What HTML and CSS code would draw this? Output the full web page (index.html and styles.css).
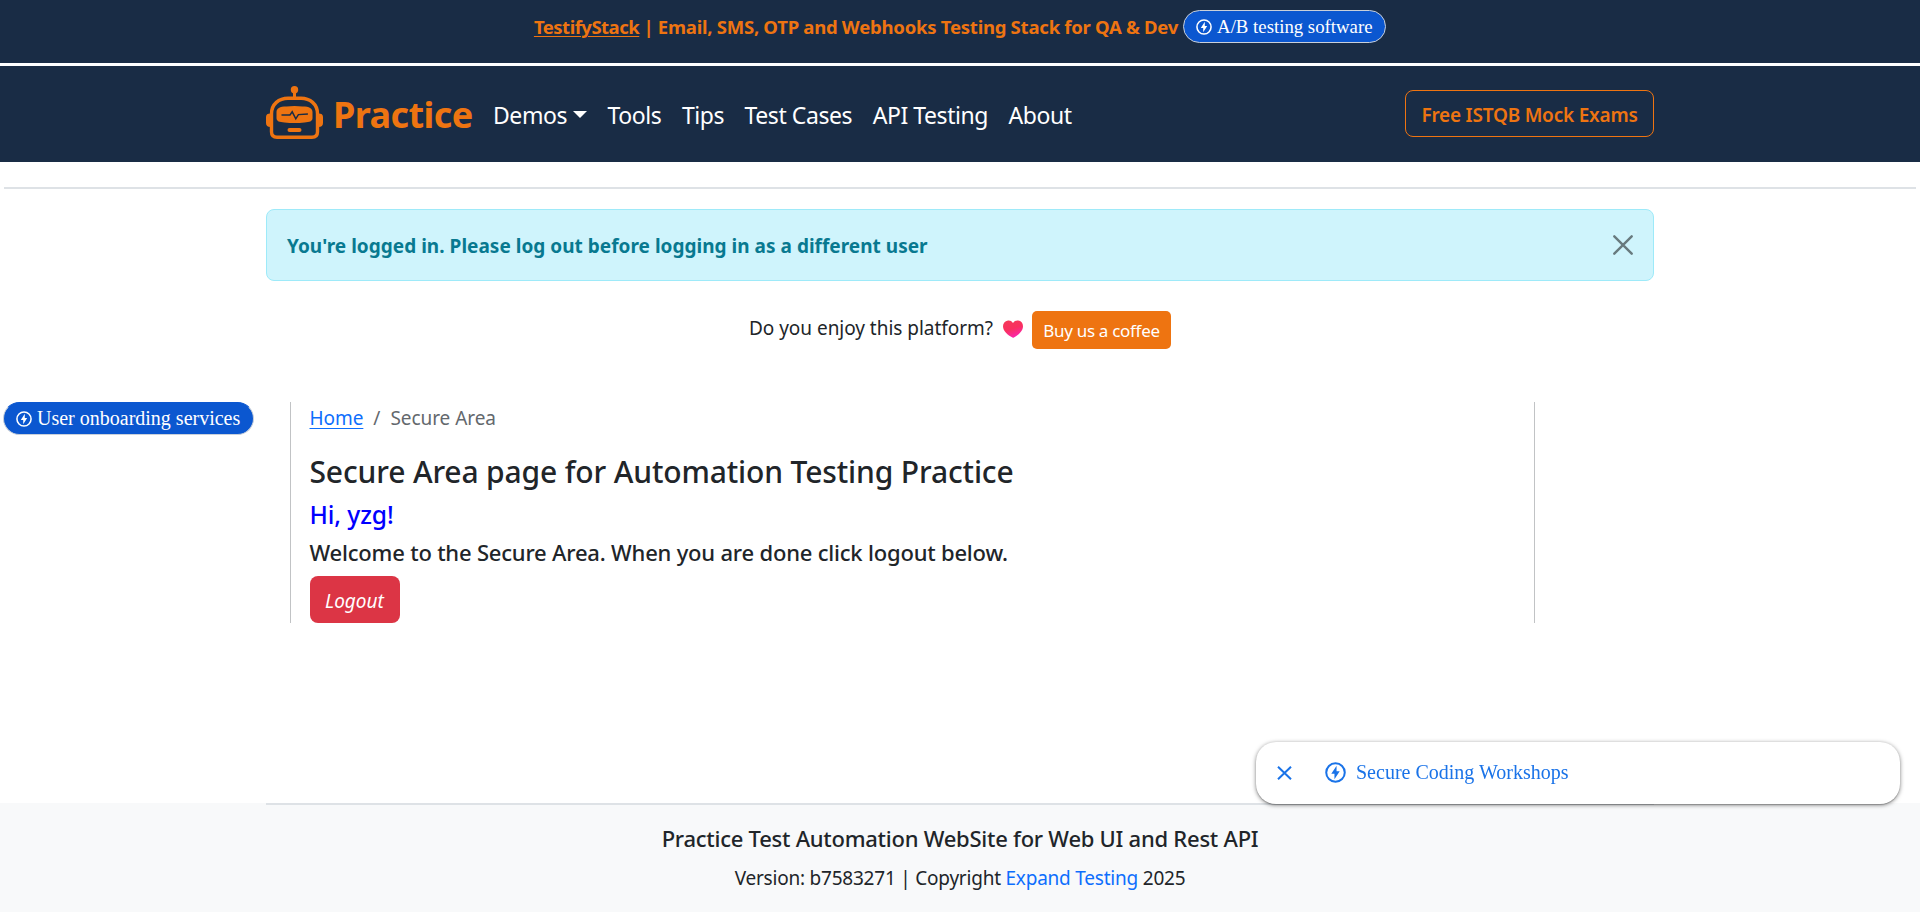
FILE: index.html
```html
<!DOCTYPE html>
<html lang="en">
<head>
<meta charset="utf-8">
<title>Secure Area page for Automation Testing Practice</title>
<link rel="stylesheet" href="styles.css">
</head>
<body>
<svg class="sprite" aria-hidden="true">
  <symbol id="bolt" viewBox="0 0 24 24">
    <circle cx="12" cy="12" r="10.6" fill="none" stroke="currentColor" stroke-width="2.3"/>
    <path fill="currentColor" d="M13.2 4.2 7.2 13.4h3.6v6.4l6-9.3h-3.6z"/>
  </symbol>
</svg>

<div class="banner">
  <span class="banner-text"><a href="#">TestifyStack</a> | Email, SMS, OTP and Webhooks Testing Stack for QA &amp; Dev</span>
  <a class="pill pill-top" href="#"><svg class="pill-icon"><use href="#bolt"/></svg><span>A/B testing software</span></a>
</div>

<header class="navbar">
  <div class="container nav-row">
    <a class="brand" href="#">
      <svg class="logo" viewBox="0 0 57 53">
        <g fill="#ee7411">
          <circle cx="28.5" cy="3.8" r="3.7"/>
          <rect x="27" y="5" width="3" height="7"/>
          <path d="M4.5 27.5v13.500C1.500 41 0 39.500 0 37v-6c0-2.500 1.500-3.500 4.500-3.500zM52.500 27.500c3 0 4.500 1 4.500 3.500v6c0 2.500-1.500 4-4.500 4z"/>
          <path d="M20.500 20.500q8-.800 16 0c7 0 10 2 10 5.500v6c0 3.500-3 4-8 4.500q-10 1.200-20 0c-5-.500-8-1-8-4.500v-6c0-3.500 3-5.500 10-5.500z"/>
          <rect x="21.500" y="42" width="14" height="4" rx="2"/>
        </g>
        <path d="M22 12.200h13c9 0 16.500 6 16.500 15.500v18c0 3.500-2 5.500-5.500 5.500H11c-3.500 0-5.500-2-5.500-5.500v-18C5.500 18.200 13 12.200 22 12.200z" fill="none" stroke="#ee7411" stroke-width="3.400"/>
        <path d="M15.500 29h8.500l2.200-3.200 3.600 7 2.600-4.200 9.500-.600" fill="none" stroke="#192c45" stroke-width="1.500"/>
      </svg>
      <span>Practice</span>
    </a>
    <nav class="links">
      <a class="demos" href="#">Demos<i class="caret"></i></a>
      <a href="#">Tools</a>
      <a href="#">Tips</a>
      <a href="#">Test Cases</a>
      <a href="#">API Testing</a>
      <a href="#">About</a>
    </nav>
    <a class="exams" href="#">Free ISTQB Mock Exams</a>
  </div>
</header>

<hr class="rule">

<div class="container alert">
  <b>You're logged in. Please log out before logging in as a different user</b>
  <svg class="alert-close" viewBox="0 0 20 20"><path d="M1.300 1.300l17.400 17.400M18.700 1.300L1.300 18.700"/></svg>
</div>

<div class="support">
  <span>Do you enjoy this platform?</span>
  <svg class="heart" viewBox="0 0 20 18">
    <defs><linearGradient id="hg" x1="0.200" y1="0" x2="0.600" y2="1"><stop offset="0" stop-color="#f5395a"/><stop offset=".5" stop-color="#f9305f"/><stop offset="1" stop-color="#fb24b4"/></linearGradient></defs>
    <path fill="url(#hg)" d="M10 3C8.600.800 6.800.200 5 .500 1.800.900 0 3.300 0 6.200c0 4.800 4.800 8.800 9.500 11.400.500.300.900.300 1.400 0C15.500 14.700 20 11 20 6.200 20 3.100 18 .800 15.200.500 13 .300 11.200 1 10 3z"/>
  </svg>
  <a class="coffee" href="#">Buy us a coffee</a>
</div>

<div class="columns">
  <aside><a class="pill pill-side" href="#"><svg class="pill-icon"><use href="#bolt"/></svg><span>User onboarding services</span></a></aside>
  <main class="content">
    <div class="crumbs"><a href="#">Home</a><span class="slash">/</span><span>Secure Area</span></div>
    <h1>Secure Area page for Automation Testing Practice</h1>
    <h2>Hi, yzg!</h2>
    <h3>Welcome to the Secure Area. When you are done click logout below.</h3>
    <a class="logout" href="#">Logout</a>
  </main>
</div>

<footer>
  <div class="container foot-rule"></div>
  <h4>Practice Test Automation WebSite for Web UI and Rest API</h4>
  <p>Version: b7583271 | Copyright <a href="#">Expand Testing</a> 2025</p>
</footer>

<div class="anchor-ad">
  <svg class="ad-close" viewBox="0 0 15 14"><path d="M1 .7l13 12.600M14 .7L1 13.300"/></svg>
  <svg class="ad-icon"><use href="#bolt"/></svg>
  <span>Secure Coding Workshops</span>
</div>
</body>
</html>
```
FILE: styles.css
```css
* { box-sizing: border-box; }
body {
  margin: 0;
  height: 912px;
  overflow: hidden;
  display: flex;
  flex-direction: column;
  font: 19px/30px "Noto Sans", "Open Sans", sans-serif;
  color: #212529;
  background: #fff;
}
a { color: inherit; text-decoration: none; }
h1, h2, h3, h4, p { margin: 0; font-weight: 500; white-space: nowrap; }
.sprite { display: none; }
svg { flex: none; }
.container { width: 1388px; margin-left: auto; margin-right: auto; }

.banner {
  height: 63px;
  padding-top: 10px;
  display: flex;
  justify-content: center;
  align-items: flex-start;
  gap: 5px;
  background: #192c45;
}
.banner-text {
  line-height: 34px;
  font-size: 18.5px;
  font-weight: 700;
  letter-spacing: -.2px;
  word-spacing: -.3px;
  color: #ee7411;
}
.banner-text a { text-decoration: underline; text-decoration-thickness: 1px; text-underline-offset: 2px; letter-spacing: -.5px; }

.pill {
  display: inline-flex;
  align-items: center;
  height: 33px;
  padding-left: 12px;
  border: 1px solid #c9d0da;
  border-radius: 17px;
  background: #0b57d0;
  color: #fff;
  font-family: "Liberation Serif", serif;
  white-space: nowrap;
}
.pill-icon { width: 16px; height: 16px; margin-right: 5px; }
.pill-top { width: 203px; font-size: 18.8px; }
.pill-top span { padding-top: 1px; }
.pill-side { width: 251px; margin-left: -1px; font-size: 20px; border-top-color: #0b57d0; }

.navbar { height: 96px; margin-top: 3px; background: #192c45; }
.nav-row { display: flex; align-items: center; height: 96px; }
.brand {
  display: flex;
  align-items: center;
  gap: 10px;
  width: 227px;
  font-size: 36px;
  font-weight: 700;
  letter-spacing: -.6px;
  color: #ee7411;
}
.brand span { padding-top: 2px; }
.logo { width: 57px; height: 53px; margin-bottom: 3px; }
.links { display: flex; gap: 20.5px; padding-top: 2px; font-size: 23px; letter-spacing: -.43px; color: #fff; }
.demos { display: flex; align-items: center; }
.caret { margin: -2px 0 0 6px; border: 7px solid transparent; border-top-color: #fff; border-bottom: 0; }
.exams {
  margin: 0 0 2px auto;
  width: 249px;
  height: 47px;
  border: 1px solid #ee7411;
  border-radius: 8px;
  text-align: center;
  line-height: 48px;
  font-weight: 600;
  letter-spacing: -.21px;
  color: #ee7411;
}

.rule { width: 1912px; height: 2px; margin: 25px auto 20px; border: 0; background: #dee2e6; flex: none; }

.alert {
  display: flex;
  justify-content: space-between;
  align-items: center;
  height: 72px;
  padding: 0 20px;
  border: 1px solid #9eeaf9;
  border-radius: 8px;
  background: #cff4fc;
  color: #087990;
}
.alert b { padding-top: 2px; letter-spacing: .02px; }
.alert-close { width: 20px; height: 20px; fill: none; stroke: #687a7e; stroke-width: 2.4; stroke-linecap: round; }

.support { display: flex; justify-content: center; margin-top: 30px; height: 38px; letter-spacing: -.03px; }
.support > span { line-height: 35px; }
.heart { width: 20px; height: 18px; margin: 9px 9px 0 10px; }
.coffee {
  width: 139px;
  height: 38px;
  border-radius: 5px;
  background: #ee7411;
  color: #fff;
  text-align: center;
  font-size: 17px;
  line-height: 39px;
  letter-spacing: -.3px;
}

.columns { display: grid; grid-template-columns: 286px 1245px; padding-left: 4px; margin-top: 53px; }
aside { line-height: 0; }
aside .pill { line-height: normal; }
.content { height: 221px; padding-left: 18.5px; border: solid #c1c3c5; border-width: 0 1px; }
.crumbs { display: flex; height: 51px; font-size: 19px; line-height: 32px; letter-spacing: -.05px; color: #63686d; }
.crumbs a { color: #0d6efd; text-decoration: underline; text-underline-offset: 3px; }
.slash { padding: 0 10px; }
h1 { font-size: 30px; line-height: 38px; letter-spacing: -.14px; }
h2 { font-size: 24.6px; line-height: 30px; margin-top: 9px; letter-spacing: -.1px; color: #00f; }
h3 { font-size: 22px; line-height: 26px; margin-top: 9px; letter-spacing: -.2px; }
.logout {
  display: block;
  width: 90px;
  height: 47px;
  margin-top: 11px;
  border-radius: 8px;
  background: #dc3545;
  color: #fff;
  font-style: italic;
  line-height: 50px;
  text-align: center;
}

footer { height: 109px; margin-top: auto; background: #f8f9fa; text-align: center; }
.foot-rule { height: 2px; background: #dee2e6; }
h4 { margin-top: 19px; font-size: 22px; line-height: 28px; letter-spacing: -.25px; }
p { margin-top: 9px; font-weight: 400; letter-spacing: -.22px; line-height: 34px; }
p a { color: #0d6efd; }

.anchor-ad {
  position: fixed;
  right: 20px;
  bottom: 108px;
  width: 644px;
  height: 62px;
  padding: 0 0 1px 21px;
  display: flex;
  align-items: center;
  border-radius: 20px;
  background: #fff;
  box-shadow: 0 1px 4px rgba(0, 0, 0, .5), 0 1px 1px rgba(0, 0, 0, .2);
  color: #1a73e8;
  font: 20px "Liberation Serif", serif;
}
.ad-close { width: 15px; height: 14px; fill: none; stroke: #1a73e8; stroke-width: 2; }
.ad-icon { width: 21px; height: 21px; margin: 0 10px 0 33px; }
```
